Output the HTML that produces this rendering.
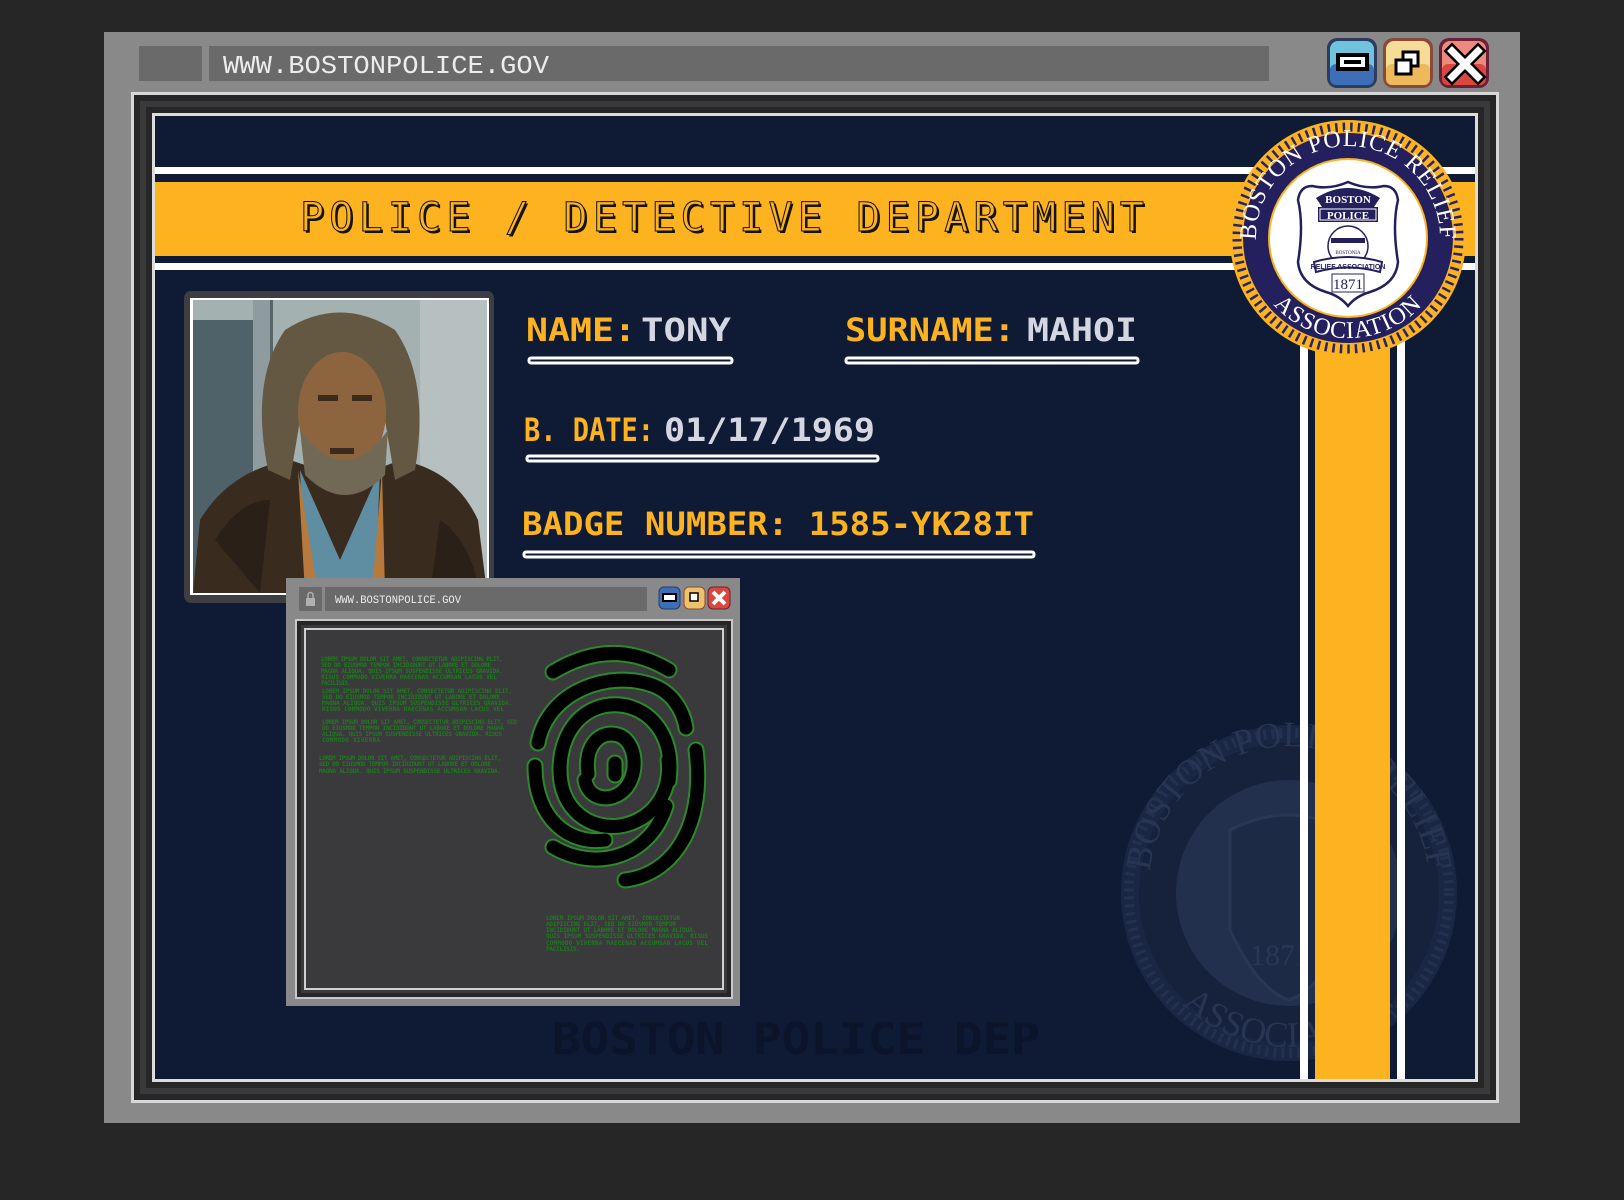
<!DOCTYPE html>
<html><head><meta charset="utf-8"><style>
html,body{margin:0;padding:0;background:#262626;}
svg{display:block}
</style></head><body>
<svg width="1624" height="1200" viewBox="0 0 1624 1200" xmlns="http://www.w3.org/2000/svg">
<defs>
<clipPath id="navyclip"><rect x="155" y="116" width="1320" height="963"/></clipPath>
<clipPath id="photoclip"><rect x="193" y="300" width="294" height="293"/></clipPath>
<path id="sealTop" d="M1268.3,284 A92,92 0 1 1 1427.7,284"/>
<path id="sealBot" d="M1248,238 A100,100 0 0 0 1448,238"/>
<path id="wmTop" d="M1167,955 A140,140 0 1 1 1411,955"/>
<path id="wmBot" d="M1135,893 A154,154 0 0 0 1443,893"/>
</defs>
<rect width="1624" height="1200" fill="#262626"/>
<!-- outer frame -->
<rect x="104" y="32" width="1416" height="1091" fill="#898989"/>
<rect x="139" y="46" width="63" height="35" fill="#6a6a6a"/>
<rect x="209" y="46" width="1060" height="35" fill="#6a6a6a"/>
<text x="223" y="73" font-family="Liberation Mono, monospace" font-size="26" fill="#ececec" textLength="326" lengthAdjust="spacingAndGlyphs">WWW.BOSTONPOLICE.GOV</text>
<!-- buttons -->
<g>
<rect x="1327" y="38" width="50" height="50" rx="10" fill="#2c3b5e"/>
<rect x="1330" y="41" width="44" height="44" rx="8" fill="#6fc3dc"/>
<rect x="1330" y="64" width="44" height="21" rx="6" fill="#3d6fb8"/>
<rect x="1338" y="55" width="29" height="14" fill="#fff" stroke="#000" stroke-width="4"/>
<rect x="1344" y="60" width="17" height="4" fill="#000"/>
<rect x="1383" y="38" width="50" height="50" rx="10" fill="#8a4a3a"/>
<rect x="1386" y="41" width="44" height="44" rx="8" fill="#f6dc94"/>
<rect x="1386" y="64" width="44" height="21" rx="6" fill="#edb95a"/>
<rect x="1403" y="52" width="15" height="14" fill="#fff" stroke="#000" stroke-width="3"/>
<rect x="1396" y="60" width="15" height="14" fill="#fff" stroke="#000" stroke-width="3"/>
<rect x="1439" y="38" width="50" height="50" rx="10" fill="#6a2036"/>
<rect x="1442" y="41" width="44" height="44" rx="8" fill="#ec8a80"/>
<rect x="1442" y="64" width="44" height="21" rx="6" fill="#d9473f"/>
<path d="M1452,51 L1478,77 M1478,51 L1452,77" stroke="#000" stroke-width="12" stroke-linecap="square"/>
<path d="M1452,51 L1478,77 M1478,51 L1452,77" stroke="#fff" stroke-width="7" stroke-linecap="square"/>
</g>
<!-- inner borders -->
<rect x="131" y="92" width="1368" height="1011" fill="#d8d8d8"/>
<rect x="134" y="95" width="1362" height="1005" fill="#262626"/>
<rect x="140" y="101" width="1350" height="993" fill="#3a393b"/>
<rect x="146" y="107" width="1338" height="981" fill="#262626"/>
<rect x="152" y="113" width="1326" height="969" fill="#dcdcdc"/>
<rect x="155" y="116" width="1320" height="963" fill="#0f1b35"/>
<g clip-path="url(#navyclip)">
<!-- watermark seal -->
<g opacity="0.9">
<circle cx="1289" cy="893" r="168" fill="#1c2946"/>
<circle cx="1289" cy="893" r="160" fill="none" stroke="#26344f" stroke-width="10" stroke-dasharray="3 5"/>
<circle cx="1289" cy="893" r="150" fill="#17223c"/>
<circle cx="1289" cy="893" r="113" fill="#253350"/>
<path d="M1230,830 Q1289,800 1345,830 L1348,930 Q1320,990 1289,1000 Q1258,990 1230,930 Z" fill="#1f2c48" stroke="#2d3b58" stroke-width="3"/>
<text font-family="Liberation Serif, serif" font-size="36" fill="#2a3856"><textPath href="#wmTop" startOffset="50%" text-anchor="middle">BOSTON POLICE RELIEF</textPath></text>
<text font-family="Liberation Serif, serif" font-size="36" fill="#2a3856"><textPath href="#wmBot" startOffset="50%" text-anchor="middle">ASSOCIATION</textPath></text>
<text x="1250" y="965" font-family="Liberation Serif, serif" font-size="30" fill="#2d3b58">1871</text>
</g>
<text x="552" y="1054" font-family="DejaVu Sans Mono, monospace" font-weight="bold" font-size="44" fill="#0b1428" textLength="488" lengthAdjust="spacingAndGlyphs">BOSTON POLICE DEP</text>
<!-- header stripes -->
<rect x="155" y="167" width="1320" height="7" fill="#fff"/>
<rect x="155" y="182" width="1320" height="74" fill="#fdb21f"/>
<rect x="155" y="263" width="1320" height="7" fill="#fff"/>
<!-- vertical stripes -->
<rect x="1300" y="240" width="8" height="840" fill="#fff"/>
<rect x="1315" y="240" width="75" height="840" fill="#fdb21f"/>
<rect x="1397" y="240" width="8" height="840" fill="#fff"/>
</g>
<text x="302" y="233" font-family="DejaVu Sans Mono, monospace" font-size="40" fill="#17120a" textLength="856" lengthAdjust="spacing" letter-spacing="12">POLICE / DETECTIVE DEPARTMENT</text>
<text x="300" y="231" font-family="DejaVu Sans Mono, monospace" font-size="40" fill="#fdb21f" stroke="#111" stroke-width="1" textLength="856" lengthAdjust="spacing" letter-spacing="12">POLICE / DETECTIVE DEPARTMENT</text>
<!-- seal -->
<g>
<circle cx="1348" cy="238" r="118" fill="#fbb321"/>
<circle cx="1348" cy="238" r="111" fill="none" stroke="#2a2262" stroke-width="9" stroke-dasharray="2.5 5"/>
<circle cx="1348" cy="238" r="105" fill="#24205e"/>
<circle cx="1348" cy="238" r="80" fill="#fbb321"/>
<circle cx="1348" cy="238" r="78" fill="#fff"/>
<text font-family="Liberation Serif, serif" font-size="24" fill="#fff" letter-spacing="1"><textPath href="#sealTop" startOffset="50%" text-anchor="middle">BOSTON POLICE RELIEF</textPath></text>
<text font-family="Liberation Serif, serif" font-size="24" fill="#fff" letter-spacing="1"><textPath href="#sealBot" startOffset="50%" text-anchor="middle">ASSOCIATION</textPath></text>
<path d="M1298,200 Q1300,186 1312,186 Q1330,190 1348,182 Q1366,190 1384,186 Q1396,186 1398,200 Q1392,225 1398,262 Q1396,284 1370,292 Q1356,296 1348,306 Q1340,296 1326,292 Q1300,284 1298,262 Q1304,225 1298,200 Z" fill="#fff" stroke="#24205e" stroke-width="2.5"/>
<path d="M1316,198 Q1348,178 1380,198 L1374,207 L1322,207 Z" fill="#24205e"/>
<text x="1348" y="203" font-family="Liberation Serif, serif" font-weight="bold" font-size="11" fill="#fff" text-anchor="middle">BOSTON</text>
<rect x="1318" y="207" width="60" height="15" fill="#24205e"/>
<rect x="1320" y="209" width="56" height="11" fill="none" stroke="#fff" stroke-width="1"/>
<text x="1348" y="219" font-family="Liberation Serif, serif" font-weight="bold" font-size="11" fill="#fff" text-anchor="middle">POLICE</text>
<circle cx="1348" cy="246" r="20" fill="none" stroke="#24205e" stroke-width="1.5"/>
<rect x="1331" y="238" width="34" height="5" fill="#24205e"/>
<text x="1348" y="254" font-family="Liberation Serif, serif" font-size="5" fill="#24205e" text-anchor="middle">BOSTONIA</text>
<path d="M1314,262 Q1348,252 1382,262 L1380,272 Q1348,263 1316,272 Z" fill="#fff" stroke="#24205e" stroke-width="2"/>
<text x="1348" y="269" font-family="Liberation Sans, sans-serif" font-weight="bold" font-size="7" fill="#24205e" text-anchor="middle">RELIEF ASSOCIATION</text>
<rect x="1332" y="274" width="32" height="18" fill="none" stroke="#24205e" stroke-width="1"/>
<text x="1348" y="289" font-family="Liberation Serif, serif" font-size="15" fill="#24205e" text-anchor="middle">1871</text>
</g>
<!-- photo -->
<rect x="184" y="291" width="310" height="312" rx="7" fill="#3e3d42"/>
<rect x="190" y="298" width="299" height="297" fill="#fff"/>
<g clip-path="url(#photoclip)">
<rect x="193" y="300" width="294" height="293" fill="#a4b1b1"/>
<rect x="193" y="320" width="60" height="270" fill="#4f6169"/>
<rect x="253" y="300" width="19" height="293" fill="#8e9b9f"/>
<rect x="270" y="300" width="3" height="260" fill="#5a6468"/>
<rect x="420" y="300" width="69" height="293" fill="#b6c0c0"/>
<path d="M193,593 L200,520 Q230,470 290,460 L350,480 L400,460 Q455,470 478,520 L487,593 Z" fill="#3a2b1f"/>
<path d="M215,540 Q240,500 270,500 L260,593 Z M440,520 Q470,540 480,593 L430,593 Z" fill="#2b2017"/>
<path d="M300,470 L340,560 L380,470 L375,593 L305,593 Z" fill="#5f8da2"/>
<path d="M298,470 L318,593 L305,593 Z M382,470 L372,593 L385,593 Z" fill="#b77a3c"/>
<path d="M268,470 Q250,380 285,330 Q340,295 395,330 Q430,380 415,470 L395,480 L385,420 L300,420 L290,480 Z" fill="#645843"/>
<ellipse cx="342" cy="412" rx="44" ry="60" fill="#8c653f"/>
<path d="M300,430 Q345,490 388,430 L385,475 Q345,515 305,475 Z" fill="#716955"/>
<rect x="318" y="395" width="20" height="6" fill="#3b2a1d"/>
<rect x="352" y="395" width="20" height="6" fill="#3b2a1d"/>
<rect x="330" y="448" width="24" height="6" fill="#3b2a1d"/>
</g>
<!-- fields -->
<g font-family="DejaVu Sans Mono, monospace" font-weight="bold" font-size="32">
<text x="526" y="341" fill="#fdb21f" textLength="110" lengthAdjust="spacingAndGlyphs">NAME:</text>
<text x="641" y="341" fill="#d4d6e2" textLength="90" lengthAdjust="spacingAndGlyphs">TONY</text>
<text x="845" y="341" fill="#fdb21f" textLength="170" lengthAdjust="spacingAndGlyphs">SURNAME:</text>
<text x="1027" y="341" fill="#d4d6e2" textLength="110" lengthAdjust="spacingAndGlyphs">MAHOI</text>
<text x="524" y="441" fill="#fdb21f" textLength="130" lengthAdjust="spacingAndGlyphs">B. DATE:</text>
<text x="664" y="441" fill="#d4d6e2" textLength="211" lengthAdjust="spacingAndGlyphs">01/17/1969</text>
<text x="522" y="535" fill="#fdb21f" textLength="512" lengthAdjust="spacingAndGlyphs">BADGE NUMBER: 1585-YK28IT</text>
</g>
<g fill="#0f1b35" stroke="#fff" stroke-width="3">
<rect x="529" y="358" width="203" height="5" rx="2"/>
<rect x="846" y="358" width="292" height="5" rx="2"/>
<rect x="527" y="456" width="351" height="5" rx="2"/>
<rect x="524" y="552" width="510" height="5" rx="2"/>
</g>
<!-- popup -->
<rect x="286" y="578" width="454" height="428" fill="#898989"/>
<rect x="299" y="587" width="23" height="24" fill="#6a6a6a"/>
<rect x="306" y="598" width="9" height="8" fill="#b0b0b0"/>
<path d="M308,598 v-3 a2.5,2.5 0 0 1 5,0 v3" fill="none" stroke="#b0b0b0" stroke-width="1.5"/>
<rect x="325" y="587" width="322" height="24" fill="#6a6a6a"/>
<text x="335" y="603" font-family="Liberation Mono, monospace" font-size="11" fill="#ececec" textLength="126" lengthAdjust="spacingAndGlyphs">WWW.BOSTONPOLICE.GOV</text>
<rect x="659" y="587" width="21" height="22" rx="5" fill="#3d6fb8" stroke="#2c3b5e"/>
<rect x="663" y="594" width="13" height="7" fill="#fff" stroke="#000" stroke-width="2"/>
<rect x="684" y="587" width="21" height="22" rx="5" fill="#edc26a" stroke="#8a4a3a"/>
<rect x="690" y="593" width="8" height="8" fill="#fff" stroke="#000" stroke-width="1.5"/>
<rect x="708" y="587" width="22" height="22" rx="5" fill="#d9473f" stroke="#6a2036"/>
<path d="M713,592 L725,604 M725,592 L713,604" stroke="#fff" stroke-width="4"/>
<rect x="295" y="619" width="438" height="380" fill="#c8c8c8"/>
<rect x="297" y="621" width="434" height="376" fill="#262626"/>
<rect x="301" y="625" width="426" height="368" fill="#3a393b"/>
<rect x="304" y="628" width="420" height="362" fill="#d0d0d0"/>
<rect x="306" y="630" width="416" height="358" fill="#3a393b"/>
<g font-family="DejaVu Sans Mono, monospace" font-size="6" fill="#1f7a1f" font-weight="bold">
<text x="321" y="661" textLength="182">LOREM IPSUM DOLOR SIT AMET, CONSECTETUR ADIPISCING ELIT,</text>
<text x="321" y="667" textLength="170">SED DO EIUSMOD TEMPOR INCIDIDUNT UT LABORE ET DOLORE</text>
<text x="321" y="673" textLength="182">MAGNA ALIQUA. QUIS IPSUM SUSPENDISSE ULTRICES GRAVIDA.</text>
<text x="321" y="679" textLength="176">RISUS COMMODO VIVERRA MAECENAS ACCUMSAN LACUS VEL</text>
<text x="321" y="685" textLength="30">FACILISIS.</text>
<text x="322" y="693" textLength="190">LOREM IPSUM DOLOR SIT AMET, CONSECTETUR ADIPISCING ELIT,</text>
<text x="322" y="699" textLength="178">SED DO EIUSMOD TEMPOR INCIDIDUNT UT LABORE ET DOLORE</text>
<text x="322" y="705" textLength="190">MAGNA ALIQUA. QUIS IPSUM SUSPENDISSE ULTRICES GRAVIDA.</text>
<text x="322" y="711" textLength="182">RISUS COMMODO VIVERRA MAECENAS ACCUMSAN LACUS VEL</text>
<text x="322" y="724" textLength="195">LOREM IPSUM DOLOR SIT AMET, CONSECTETUR ADIPISCING ELIT, SED</text>
<text x="322" y="730" textLength="182">DO EIUSMOD TEMPOR INCIDIDUNT UT LABORE ET DOLORE MAGNA</text>
<text x="322" y="736" textLength="180">ALIQUA. QUIS IPSUM SUSPENDISSE ULTRICES GRAVIDA. RISUS</text>
<text x="322" y="742" textLength="58">COMMODO VIVERRA</text>
<text x="319" y="760" textLength="182">LOREM IPSUM DOLOR SIT AMET, CONSECTETUR ADIPISCING ELIT,</text>
<text x="319" y="766" textLength="172">SED DO EIUSMOD TEMPOR INCIDIDUNT UT LABORE ET DOLORE</text>
<text x="319" y="773" textLength="182">MAGNA ALIQUA. QUIS IPSUM SUSPENDISSE ULTRICES GRAVIDA.</text>
<text x="546" y="920" textLength="134">LOREM IPSUM DOLOR SIT AMET, CONSECTETUR</text>
<text x="546" y="926" textLength="130">ADIPISCING ELIT, SED DO EIUSMOD TEMPOR</text>
<text x="546" y="932" textLength="150">INCIDIDUNT UT LABORE ET DOLORE MAGNA ALIQUA.</text>
<text x="546" y="938" textLength="162">QUIS IPSUM SUSPENDISSE ULTRICES GRAVIDA. RISUS</text>
<text x="546" y="945" textLength="162">COMMODO VIVERRA MAECENAS ACCUMSAN LACUS VEL</text>
<text x="546" y="951" textLength="34">FACILISIS.</text>
</g>
<g fill="none" stroke-linecap="round">
<g stroke="#2a8a2a" stroke-width="17">
<path d="M553,672 Q612,636 669,670"/>
<path d="M538,743 C548,690 610,670 652,685 C672,692 683,710 686,728"/>
<path d="M669,781 C675,735 650,708 620,705 C585,702 560,730 560,770 C560,810 590,830 620,826 C655,820 672,790 668,760"/>
<path d="M588,774 C584,745 600,730 618,735 C635,740 640,770 626,788 C612,804 588,800 585,780"/>
<path d="M615,763 L615,775"/>
<path d="M696,750 C706,830 670,875 625,880"/>
<path d="M535,766 C535,820 570,845 605,840"/>
<path d="M553,847 C595,872 650,858 666,806"/>
</g>
<g stroke="#000" stroke-width="13">
<path d="M553,672 Q612,636 669,670"/>
<path d="M538,743 C548,690 610,670 652,685 C672,692 683,710 686,728"/>
<path d="M669,781 C675,735 650,708 620,705 C585,702 560,730 560,770 C560,810 590,830 620,826 C655,820 672,790 668,760"/>
<path d="M588,774 C584,745 600,730 618,735 C635,740 640,770 626,788 C612,804 588,800 585,780"/>
<path d="M615,763 L615,775"/>
<path d="M696,750 C706,830 670,875 625,880"/>
<path d="M535,766 C535,820 570,845 605,840"/>
<path d="M553,847 C595,872 650,858 666,806"/>
</g>
</g>
</svg>
</body></html>
